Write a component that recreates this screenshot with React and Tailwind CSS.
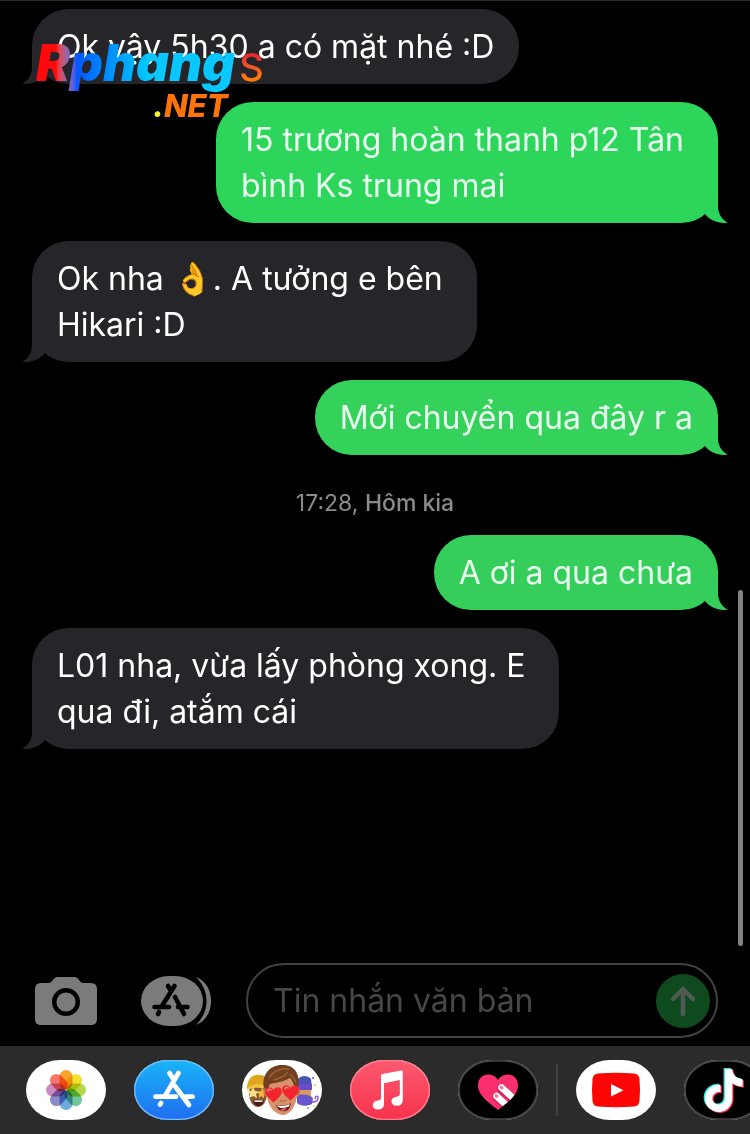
import React from "react";
import { FaTiktok } from "react-icons/fa6";

const GREENS = {
  bright: "bg-[#2dd65b] text-[#2dd65b]",
  mid: "bg-[#34d25b] text-[#34d25b]",
  soft: "bg-[#35ce5a] text-[#35ce5a]",
};

function Tail({ side }) {
  return (
    <svg
      viewBox="0 0 34 40"
      aria-hidden="true"
      className={
        "absolute bottom-0 h-10 w-[34px] " +
        (side === "left" ? "-left-2.5" : "-right-2.5 -scale-x-100")
      }
      fill="currentColor"
    >
      <path d="M10 0V23C10 31 6 37 0 39.6C9 41 18 37.500 23 31L30 0Z" />
    </svg>
  );
}

function Bubble({ lines, tone, children }) {
  const mine = Boolean(tone);
  const color = mine ? GREENS[tone] : "bg-[#26252a] text-[#26252a]";
  const right = lines.length > 1 ? "pr-[34px]" : "pr-[25px]";
  return (
    <li className={"relative flex px-8 " + (mine ? "justify-end" : "justify-start")}>
      <div className={"relative rounded-[37px] pt-[15px] pb-[14px] pl-[25px] " + right + " " + color}>
        <Tail side={mine ? "right" : "left"} />
        <p className={"relative text-[32px] leading-[46px] whitespace-nowrap " + (mine ? "text-[#e9fff0]" : "text-white")}>
          {lines.map((line) => (
            <span key={line} className="block">
              {line}
            </span>
          ))}
        </p>
      </div>
      {children}
    </li>
  );
}

function Watermark() {
  return (
    <div className="absolute top-7 left-9 font-['Inter'] leading-none">
      <div className="flex items-baseline">
        <span className="bg-linear-to-r from-[#ff0a0a] from-10% via-[#0a55ff] via-20% to-[#08c8ff] to-55% bg-clip-text pr-1 pb-2 text-[51px] font-black text-transparent italic">
          Rphang
        </span>
        <span className="bg-linear-to-b from-[#e8282c] from-20% to-[#ff7a08] to-80% bg-clip-text text-[38px] font-medium text-transparent">
          S
        </span>
      </div>
      <div className="-mt-1.5 pr-9 text-right text-[31px] font-extrabold text-[#ff7408] italic">
        <span className="text-[#fff02a]">.</span>NET
      </div>
    </div>
  );
}

function CameraIcon() {
  return (
    <svg viewBox="0 0 62 48" className="h-12 w-[62px]" aria-hidden="true">
      <path
        fill="#7b7b7b"
        d="M6 6H14C17 6 18 1 22 0H40C44 1 45 6 48 6H56Q62 6 62 12V42Q62 48 56 48H6Q0 48 0 42V12Q0 6 6 6Z"
      />
      <circle cx="31" cy="25" r="11.800" fill="none" stroke="#000" strokeWidth="4.400" />
    </svg>
  );
}

function DrawerIcon() {
  return (
    <svg viewBox="0 0 70 50" className="h-[50px] w-[70px]" aria-hidden="true">
      <path fill="#7b7b7b" d="M55 1C65 5 70 14 70 25S65 45 55 49C62 42 65.500 34 65.500 25S62 8 55 1Z" />
      <rect width="62" height="50" rx="28" ry="25" fill="#7b7b7b" />
      <g stroke="#000" strokeWidth="4.600" strokeLinecap="round" fill="none">
        <path d="M33.500 10L21 30M18 36L17 38M27 10L30 15M34 21L43 38M13.500 31H28M37 31H46.500" />
      </g>
    </svg>
  );
}

const PETALS = [
  "#fba22e",
  "#f5e02e",
  "#b5d84a",
  "#70c79a",
  "#6fa9de",
  "#8d8ccb",
  "#cd8cc2",
  "#f6776a",
];

function PhotosArt() {
  return (
    <g>
      {PETALS.map((color, i) => (
        <rect
          key={color}
          x="33.500"
          y="10"
          width="13"
          height="19.500"
          rx="6.500"
          fill={color}
          transform={`rotate(${i * 45} 40 30)`}
          className="mix-blend-multiply"
        />
      ))}
    </g>
  );
}

function StoreArt() {
  return (
    <g>
      <defs>
        <linearGradient id="store" x1="0" y1="0" x2="0" y2="1">
          <stop offset="0" stopColor="#19b5f8" />
          <stop offset="1" stopColor="#1f6df0" />
        </linearGradient>
      </defs>
      <rect width="80" height="60" fill="url(#store)" />
      <path
        d="M44.500 13L31 36M27 43L26 44.500M35.500 13L39 18.500M41 26L55 45M21.500 36.700H42M52 36.700H58.500"
        fill="none"
        stroke="#fff"
        strokeWidth="4.800"
        strokeLinecap="round"
      />
      <rect x="0.700" y="0.700" width="78.600" height="58.600" rx="34" ry="29.500" fill="none" stroke="#75bdf5" strokeWidth="1.200" />
    </g>
  );
}

function Heart({ x, y, s, fill }) {
  return (
    <path
      transform={`translate(${x} ${y}) scale(${s})`}
      fill={fill}
      d="M0 9C-4 5 -10 1 -10 -4C-10 -10 -3 -11 0 -6C3 -11 10 -10 10 -4C10 1 4 5 0 9Z"
    />
  );
}

function MemojiArt() {
  return (
    <g>
      <ellipse cx="16" cy="34" rx="9" ry="13" fill="#8a5a35" />
      <path d="M5 29C5 18 11 14 18 15C24 15 27 20 27 28L16 26Z" fill="#dfa51c" />
      <path d="M6 27C12 23 21 23 27 27V30C20 27 12 27 5 30Z" fill="#f1c33b" />
      <path d="M11 27L13 31L17 31.500L14 34L15 38L11 36L7 38L8 34L5 31L9 31Z" fill="#ffe08a" />
      <path d="M20 27L22 31L25 32L22 35L22 38L19 36L17 38L17 34L15 32L19 31Z" fill="#f5b837" />
      <path d="M11 40C14 41 19 41 22 40C21 45 18 46 16 46C13 46 12 43 11 40Z" fill="#4a1714" />
      <path d="M12 40.500H21L20 42H13Z" fill="#fff" />
      <path d="M56 19C59 15 66 15 69 19L70 28H56Z" fill="#4b54b5" />
      <path d="M55 24H70V30H55Z" fill="#6b4bc7" />
      <path d="M56 30H69V37H56Z" fill="#d49a62" />
      <path d="M55 36C62 33 67 35 71 38L70 44C64 47 58 46 55 43Z" fill="#6955cf" />
      <path d="M70 42C74 42 77 40 76 37C75 35 72 37 74 39" fill="none" stroke="#8555d8" strokeWidth="1.400" />
      <circle cx="71" cy="18" r="1" fill="#3b6be0" />
      <circle cx="73" cy="25" r="0.900" fill="#efbd35" />
      <circle cx="66" cy="48" r="0.900" fill="#35a3ee" />
      <circle cx="72" cy="46" r="0.900" fill="#efc84a" />
      <ellipse cx="24.500" cy="32" rx="3" ry="4.500" fill="#bd7655" />
      <ellipse cx="55" cy="32" rx="3" ry="4.500" fill="#bd7655" />
      <path d="M25 24C25 13 54 13 55 25V36C54 47 47 55 41 55C34 55 26 47 25 36Z" fill="#d7926b" />
      <path d="M22 28C19 14 29 4 41 5C53 5 59 15 56 29L52 25C50 21 50 20 48 18C38 23 31 23 28 24L25 30Z" fill="#70401f" />
      <path d="M27 18C31 11 39 8 47 9M31 20C37 19 43 16 46 12M48 14C51 16 53 20 54 23" fill="none" stroke="#9a6034" strokeWidth="1.400" />
      <Heart x={31.5} y={35} s={0.83} fill="#f3242d" />
      <Heart x={48.5} y={33} s={0.83} fill="#f3242d" />
      <path d="M25.500 31Q27 28 29 30M43 29Q44 26 46 28" fill="none" stroke="#ff837c" strokeWidth="1.500" strokeLinecap="round" />
      <path d="M38 40Q41 43 44 40" fill="none" stroke="#b86e4d" strokeWidth="1.400" />
      <path d="M34 45C38 46 45 46 49 43C48 50 44 52 41 51C37 51 35 48 34 45Z" fill="#65181b" />
      <path d="M35 45.500C39 46.500 45 46 48 44L47 46.500Q41 49 36 47Z" fill="#fff" />
      <path d="M38 50Q42 47 45 49Q42 52 38 50Z" fill="#dc6671" />
    </g>
  );
}

function MusicArt() {
  return (
    <g>
      <defs>
        <linearGradient id="music" x1="0" y1="0" x2="0" y2="1">
          <stop offset="0" stopColor="#fb5a70" />
          <stop offset="1" stopColor="#f8324d" />
        </linearGradient>
      </defs>
      <rect width="80" height="60" fill="url(#music)" />
      <path
        fill="#fff"
        d="M31 15.500Q31 14.200 32.500 13.900L51 10.400Q52.800 10.200 52.800 12V40C52.800 44 50 45.800 46.800 45.800C43.500 45.800 41.500 44 41.500 41.500C41.500 38.500 43.500 37.300 46.500 36.700C49 36.200 49.800 36 49.800 33.500V20L34 23.200V44C34 48 31.200 49.500 28 49.500C24.700 49.500 22.700 47.700 22.700 45.200C22.700 42.300 24.700 41 27.700 40.400C30.200 40 31 39.700 31 37.200Z"
      />
      <rect x="0.700" y="0.700" width="78.600" height="58.600" rx="34" ry="29.500" fill="none" stroke="#fb8090" strokeWidth="1.200" />
    </g>
  );
}

function DarkBase() {
  return (
    <g>
      <rect width="80" height="60" fill="#2b2b2b" />
      <rect x="1" y="1" width="78" height="58" rx="33" ry="29" fill="#000" stroke="#444" strokeWidth="1.600" />
    </g>
  );
}

const HEART = "M40 50C33 44 20 36 20 25.500C20 18 25 14.500 30 14.500C35 14.500 38.500 17 40 20C41.500 17 45 14.500 50 14.500C55 14.500 60 18 60 25.500C60 36 47 44 40 50Z";

function TouchArt() {
  return (
    <g>
      <DarkBase />
      <clipPath id="heart">
        <path d={HEART} />
      </clipPath>
      <path d={HEART} fill="#fb2f6e" />
      <g clipPath="url(#heart)">
        <path d="M43.500 28L60 43M38.500 36.500L54 51" stroke="#d01c50" strokeWidth="8.600" strokeLinecap="round" />
        <path d="M43.500 27.500L60 42.500M38.500 36L54 50.500" stroke="#fff" strokeWidth="6.800" strokeLinecap="round" />
        <ellipse cx="43.500" cy="27.500" rx="2.200" ry="1.800" fill="#f47c9e" transform="rotate(42 43.500 27.500)" />
        <ellipse cx="38.500" cy="36" rx="2.200" ry="1.800" fill="#f47c9e" transform="rotate(42 38.500 36)" />
      </g>
    </g>
  );
}

function YoutubeArt() {
  return (
    <g>
      <path
        fill="#fb0505"
        d="M22 13.500Q40 12 58 13.500Q63 14 63.500 19Q64.500 30 63.500 41Q63 46 58 46.500Q40 48 22 46.500Q17 46 16.500 41Q15.500 30 16.500 19Q17 14 22 13.500Z"
      />
      <path d="M35 24L47.500 30.200L35 36.500Z" fill="#fff" />
    </g>
  );
}

function TiktokArt() {
  return (
    <g>
      <DarkBase />
      <FaTiktok x="17" y="8" size={43} color="#2af0ea" />
      <FaTiktok x="19.500" y="10" size={43} color="#fb2c55" />
      <FaTiktok x="18.300" y="9" size={43} color="#fff" />
    </g>
  );
}

function AppButton({ label, children }) {
  return (
    <button type="button" aria-label={label} className="h-15 w-20 shrink-0 overflow-hidden rounded-[34px/30px] bg-white">
      <svg viewBox="0 0 80 60" className="block h-full w-full" aria-hidden="true">
        {children}
      </svg>
    </button>
  );
}

export default function App() {
  return (
    <div className="relative flex min-h-screen flex-col overflow-hidden border-t border-[#2a2a2a] bg-black font-['Inter','Noto_Sans',sans-serif]">
      <main className="flex-1 pt-2">
        <ul className="flex flex-col gap-[18px]">
          <Bubble lines={["Ok vậy 5h30 a có mặt nhé :D"]}>
            <Watermark />
          </Bubble>
          <Bubble tone="bright" lines={["15 trương hoàn thanh p12 Tân", "bình Ks trung mai"]} />
          <Bubble lines={["Ok nha 👌. A tưởng e bên", "Hikari :D"]} />
          <Bubble tone="mid" lines={["Mới chuyển qua đây r a"]} />
          <li className="pt-4 text-center text-[23px] leading-7 text-[#8b8a90]">
            17:28, <span className="font-medium">Hôm kia</span>
          </li>
          <Bubble tone="soft" lines={["A ơi a qua chưa"]} />
          <Bubble lines={["L01 nha, vừa lấy phòng xong. E", "qua đi, atắm cái"]} />
        </ul>
      </main>

      <div className="absolute right-[7px] bottom-[188px] h-[356px] w-[5px] rounded-full bg-[#828282]" />

      <form className="flex items-center pr-8 pb-2 pl-[35px]" onSubmit={(e) => e.preventDefault()}>
        <button type="button" aria-label="Camera" className="mr-11 shrink-0">
          <CameraIcon />
        </button>
        <button type="button" aria-label="Apps" className="mr-[35px] shrink-0">
          <DrawerIcon />
        </button>
        <div className="flex h-[75px] min-w-0 flex-1 items-center rounded-full border-2 border-[#424244] pr-1.5 pl-[25px]">
          <input
            type="text"
            aria-label="Tin nhắn văn bản"
            placeholder="Tin nhắn văn bản"
            className="min-w-0 flex-1 bg-transparent text-[32px] leading-[46px] text-white outline-none placeholder:text-[#47474a]"
          />
          <button
            type="submit"
            aria-label="Send"
            className="flex size-[54px] shrink-0 items-center justify-center rounded-full bg-[#0f4a1f]"
          >
            <svg viewBox="0 0 54 54" className="size-full" aria-hidden="true">
              <path d="M27 40V15M17 25L27 15L37 25" fill="none" stroke="#4f5b52" strokeWidth="4.500" strokeLinecap="round" strokeLinejoin="round" />
            </svg>
          </button>
        </div>
      </form>

      <nav className="flex h-[88px] items-center gap-7 overflow-hidden bg-[#2b2b2b] pl-[26px]">
        <AppButton label="Photos">
          <PhotosArt />
        </AppButton>
        <AppButton label="App Store">
          <StoreArt />
        </AppButton>
        <AppButton label="Memoji">
          <MemojiArt />
        </AppButton>
        <AppButton label="Music">
          <MusicArt />
        </AppButton>
        <AppButton label="Digital Touch">
          <TouchArt />
        </AppButton>
        <div className="-mx-2.5 h-[52px] w-0.5 shrink-0 bg-[#424242]" />
        <AppButton label="YouTube">
          <YoutubeArt />
        </AppButton>
        <AppButton label="TikTok">
          <TiktokArt />
        </AppButton>
      </nav>
    </div>
  );
}
